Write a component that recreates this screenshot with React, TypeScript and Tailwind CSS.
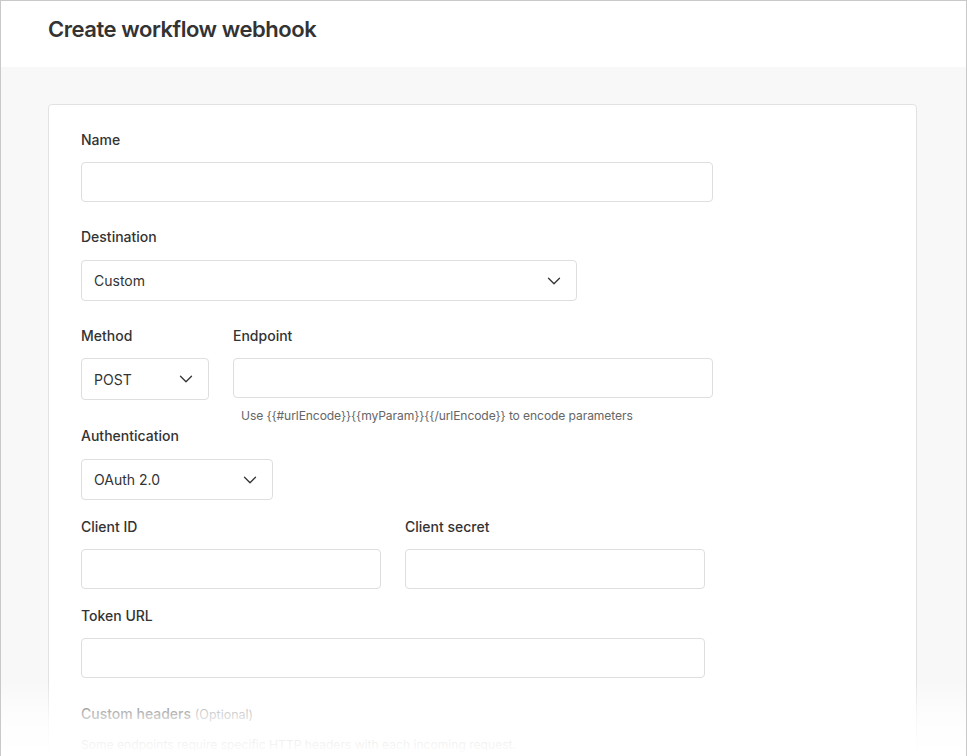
import { ChevronDown } from "lucide-react";

function Label({ children, className = "" }: { children: React.ReactNode; className?: string }) {
    return <div className={"text-[14px] leading-[22px] font-medium text-[#333] " + className}>{children}</div>;
}

function TextInput({ className = "" }: { className?: string }) {
    return <input type="text" className={"h-10 rounded border border-[#dedede] bg-white px-3 outline-none " + className} />;
}

function Select({ value, className = "" }: { value: string; className?: string }) {
    return (
        <div className={"flex h-[41px] items-center justify-between rounded border border-[#dedede] bg-white pl-3 pr-3 " + className}>
            <span className="text-[14px] text-[#333]">{value}</span>
            <ChevronDown size={22} strokeWidth={1.4} className="text-[#333]" />
        </div>
    );
}

export default function App() {
    return (
        <div
            className="relative h-[756px] overflow-hidden border-x border-t border-[#c9c9c9] bg-[#f8f8f8]"
            style={{ fontFamily: "Inter, 'Noto Sans', sans-serif" }}
        >
            <div className="flex h-[66px] items-start bg-white px-[47px] pt-[14px]">
                <h1 className="text-[22px] leading-7 font-semibold tracking-[-0.45px] text-[#333]">Create workflow webhook</h1>
            </div>

            <div className="px-[47px] pt-[37px]">
                <div className="w-[869px] rounded border border-[#e2e2e2] bg-white px-8 pt-6 pb-10">
                    <Label>Name</Label>
                    <TextInput className="mt-[11px] w-[632px]" />

                    <Label className="mt-6">Destination</Label>
                    <Select value="Custom" className="mt-3 w-[496px] pr-[11px]" />

                    <div className="mt-6 flex gap-6">
                        <div className="flex flex-col">
                            <Label>Method</Label>
                            <Select value="POST" className="mt-[11px] h-[42px] w-[128px] pr-[11px]" />
                        </div>
                        <div className="flex flex-col">
                            <Label>Endpoint</Label>
                            <TextInput className="mt-[11px] w-[480px]" />
                            <div className="mt-[9px] pl-2 text-[12.1px] leading-[18px] tracking-[-0.1px] text-[#666]">
                                Use {"{{#urlEncode}}{{myParam}}{{/urlEncode}}"} to encode parameters
                            </div>
                        </div>
                    </div>

                    <Label>Authentication</Label>
                    <Select value="OAuth 2.0" className="mt-3 w-[192px] pr-[11px]" />

                    <div className="mt-4 flex gap-6">
                        <div className="flex flex-col">
                            <Label>Client ID</Label>
                            <TextInput className="mt-[11px] w-[300px]" />
                        </div>
                        <div className="flex flex-col">
                            <Label>Client secret</Label>
                            <TextInput className="mt-[11px] w-[300px]" />
                        </div>
                    </div>

                    <Label className="mt-4">Token URL</Label>
                    <TextInput className="mt-[11px] w-[624px]" />

                    <div className="mt-[25px] text-[14px] leading-[22px] font-medium text-[#333]">
                        Custom headers <span className="text-[12.5px] font-normal text-[#777]">(Optional)</span>
                    </div>
                    <div className="mt-[9px] text-[12.1px] leading-5 text-[#666]">
                        Some endpoints require specific HTTP headers with each incoming request.
                    </div>
                </div>
            </div>

            <div className="pointer-events-none absolute inset-x-0 bottom-0 h-[76px] bg-gradient-to-b from-white/0 via-white/75 to-white" />
        </div>
    );
}
